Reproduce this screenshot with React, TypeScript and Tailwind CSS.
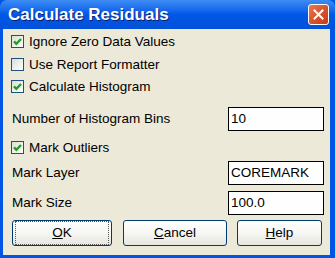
function Check({ checked }: { checked: boolean }) {
  return (
    <div className="w-[13px] h-[13px] shrink-0 border border-[#1c5180] bg-gradient-to-br from-[#dcdcd7] to-[#ffffff] flex items-center justify-center">
      {checked && (
        <svg width="9" height="9" viewBox="0 0 9 9">
          <path d="M1 4.3 L3.4 6.8 L8 2" fill="none" stroke="#21a121" strokeWidth="2.4" />
        </svg>
      )}
    </div>
  );
}

function CheckRow({ label, checked, className }: { label: string; checked: boolean; className: string }) {
  return (
    <div className={`flex items-center h-[13px] ml-[8px] ${className}`}>
      <Check checked={checked} />
      <span className="ml-[5px] leading-none">{label}</span>
    </div>
  );
}

function FieldRow({ label, value, className }: { label: string; value: string; className: string }) {
  return (
    <div className={`flex items-center justify-between h-[24px] ml-[9px] mr-[6px] ${className}`}>
      <span>{label}</span>
      <div className="w-[96px] h-[24px] border border-black bg-[#fefefe] pl-[2px] flex items-center">{value}</div>
    </div>
  );
}

function Btn({ children, focus, className }: { children: React.ReactNode; focus?: boolean; className: string }) {
  return (
    <div className={`h-[26px] rounded-[3px] border border-[#003c74] bg-gradient-to-b from-[#ffffff] via-[#f6f6f3] to-[#e6e5de] flex items-center justify-center ${className}`}>
      <div className={`w-full h-full m-[2px] flex items-center justify-center ${focus ? "border border-dotted border-[#555]" : ""}`}>
        {children}
      </div>
    </div>
  );
}

export default function App() {
  return (
    <div className="w-[335px] h-[258px] bg-[#0055e5] flex flex-col" style={{ fontFamily: '"Liberation Sans", Arial, sans-serif' }}>
      <div className="h-[29px] shrink-0 flex items-center justify-between pl-[8px] pr-[6px] rounded-t-[7px] bg-gradient-to-b from-[#3d8cf5] via-[#0058e6] to-[#0250d8]">
        <span className="text-white font-bold text-[17px] leading-none [text-shadow:1px_1px_0_#0a1e6e]">Calculate Residuals</span>
        <div className="w-[21px] h-[21px] rounded-[3px] border border-white bg-gradient-to-br from-[#e8795a] via-[#d9532c] to-[#c43c14] flex items-center justify-center">
          <svg width="11" height="11" viewBox="0 0 11 11">
            <path d="M1.5 1.5 L9.5 9.5 M9.5 1.5 L1.5 9.5" stroke="#ffffff" strokeWidth="2" strokeLinecap="square" />
          </svg>
        </div>
      </div>
      <div className="flex-1 ml-[3px] mr-[5px] mb-[3px] bg-[#ece9d8] text-[13.5px] text-black flex flex-col pt-[6px]">
        <CheckRow label="Ignore Zero Data Values" checked className="" />
        <CheckRow label="Use Report Formatter" checked={false} className="mt-[10px]" />
        <CheckRow label="Calculate Histogram" checked className="mt-[9px]" />
        <FieldRow label="Number of Histogram Bins" value="10" className="mt-[14px]" />
        <CheckRow label="Mark Outliers" checked className="mt-[10px]" />
        <FieldRow label="Mark Layer" value="COREMARK" className="mt-[7px]" />
        <FieldRow label="Mark Size" value="100.0" className="mt-[6px]" />
        <div className="flex mt-[5px] ml-[9px]">
          <Btn focus className="w-[100px]"><span><span className="underline">O</span>K</span></Btn>
          <Btn className="w-[104px] ml-[11px]"><span><span className="underline">C</span>ancel</span></Btn>
          <Btn className="w-[85px] ml-[10px]"><span><span className="underline">H</span>elp</span></Btn>
        </div>
      </div>
    </div>
  );
}
